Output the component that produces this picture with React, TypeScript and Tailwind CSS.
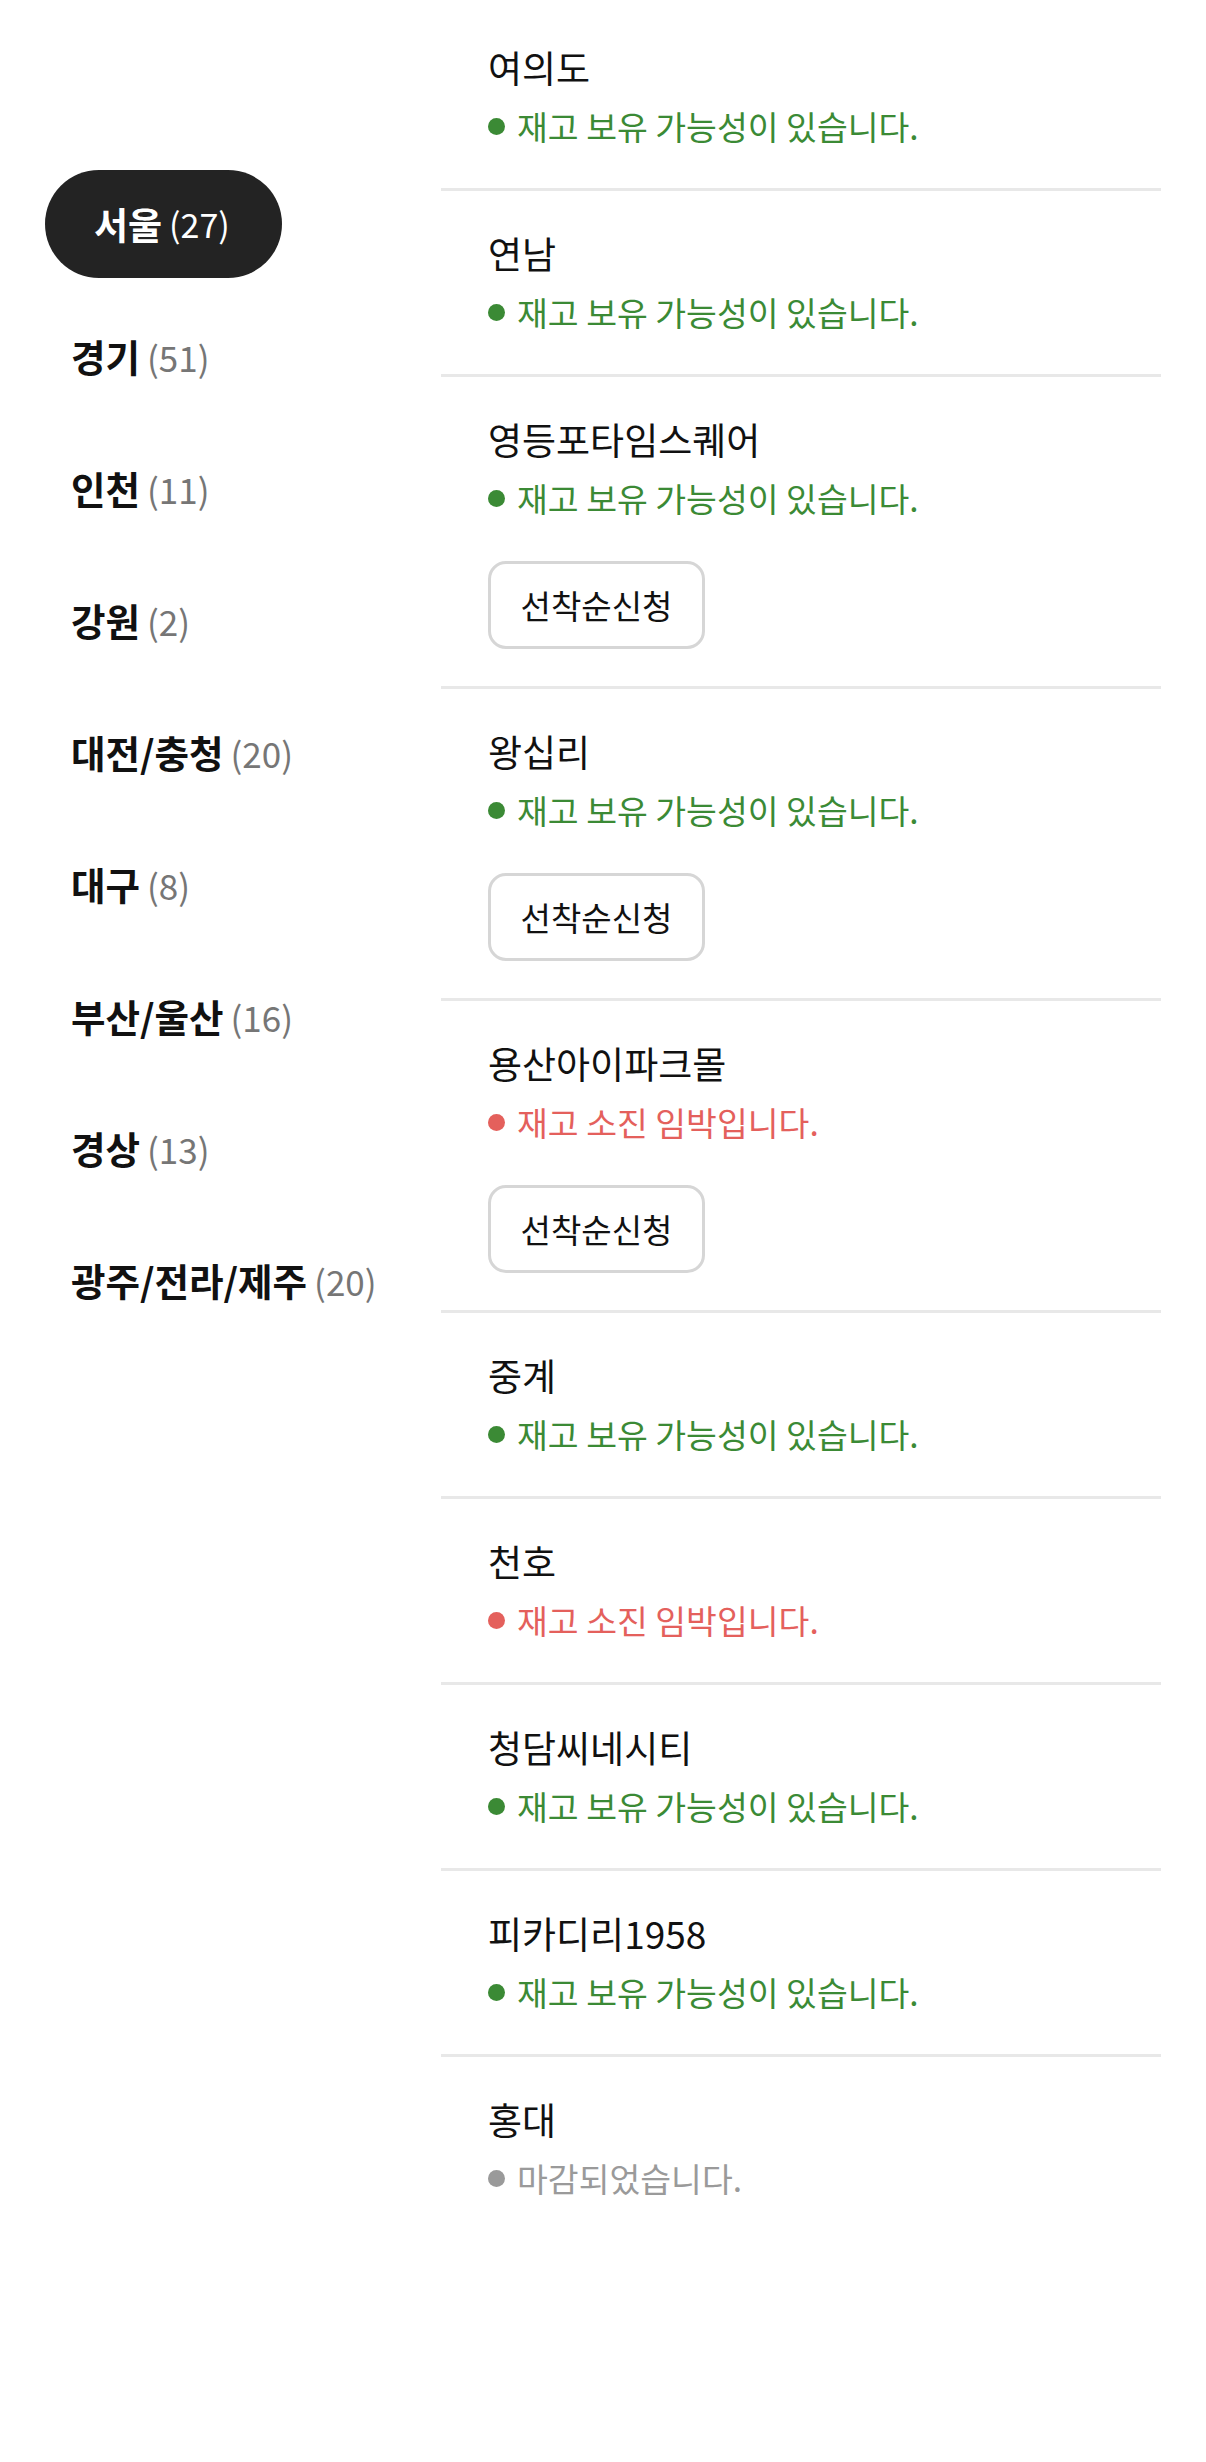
import React from "react";

type Status = "ok" | "low" | "closed";

interface Theater {
  name: string;
  status: Status;
  canApply?: boolean;
}

const regions = [
  { name: "서울", count: 27 },
  { name: "경기", count: 51 },
  { name: "인천", count: 11 },
  { name: "강원", count: 2 },
  { name: "대전/충청", count: 20 },
  { name: "대구", count: 8 },
  { name: "부산/울산", count: 16 },
  { name: "경상", count: 13 },
  { name: "광주/전라/제주", count: 20 },
];

const theaters: Theater[] = [
  { name: "여의도", status: "ok" },
  { name: "연남", status: "ok" },
  { name: "영등포타임스퀘어", status: "ok", canApply: true },
  { name: "왕십리", status: "ok", canApply: true },
  { name: "용산아이파크몰", status: "low", canApply: true },
  { name: "중계", status: "ok" },
  { name: "천호", status: "low" },
  { name: "청담씨네시티", status: "ok" },
  { name: "피카디리1958", status: "ok" },
  { name: "홍대", status: "closed" },
];

const statusText: Record<Status, string> = {
  ok: "재고 보유 가능성이 있습니다.",
  low: "재고 소진 임박입니다.",
  closed: "마감되었습니다.",
};

function StatusLine({ status }: { status: Status }) {
  const color =
    status === "ok" ? "text-[#3b8a35]" : status === "low" ? "text-[#e4605c]" : "text-[#9a9a9a]";
  const dot = status === "ok" ? "bg-[#3b8a35]" : status === "low" ? "bg-[#e4605c]" : "bg-[#9a9a9a]";
  return (
    <div className={`mt-[17px] flex h-[40px] items-center gap-[12px] ${color}`}>
      <span className={`h-[17px] w-[17px] shrink-0 rounded-full ${dot}`} />
      <span className="text-[33.5px] leading-[40px]">{statusText[status]}</span>
    </div>
  );
}

export default function App() {
  return (
    <div className="flex min-h-[2462px] w-[1206px] bg-white font-['Noto_Sans_CJK_KR','Noto_Sans',sans-serif] text-[#111]">
      <nav className="flex w-[441px] shrink-0 flex-col items-start gap-6 pl-[45px] pt-[170px]">
        {regions.map((r, i) =>
          i === 0 ? (
            <button
              key={r.name}
              className="flex h-[108px] w-[237px] items-center rounded-full bg-[#232323] pl-[49px] text-white"
            >
              <span className="text-[37px] font-bold leading-none">{r.name}</span>
              <span className="ml-[7px] text-[34px] leading-none">({r.count})</span>
            </button>
          ) : (
            <button key={r.name} className="flex h-[108px] items-center pl-[26px]">
              <span className="text-[37.5px] font-bold leading-none">{r.name}</span>
              <span className="ml-[7px] text-[35px] leading-none text-[#767676]">({r.count})</span>
            </button>
          )
        )}
      </nav>

      <div className="w-[720px] pt-[5px]">
        {theaters.map((t, i) => (
          <div
            key={t.name}
            className={`pl-[47px] pt-[40px] ${i > 0 ? "border-t-[3px] border-[#e8e8e8]" : ""} ${
              t.canApply ? "pb-[37px]" : "pb-[42px]"
            }`}
          >
            <h3 className="text-[37px] font-normal leading-[44px]">{t.name}</h3>
            <StatusLine status={t.status} />
            {t.canApply && (
              <button className="mt-[43px] flex h-[88px] w-[217px] items-center justify-center rounded-[18px] border-[3px] border-[#d6d6d6] bg-white text-[33px] leading-none">
                선착순신청
              </button>
            )}
          </div>
        ))}
      </div>
    </div>
  );
}
